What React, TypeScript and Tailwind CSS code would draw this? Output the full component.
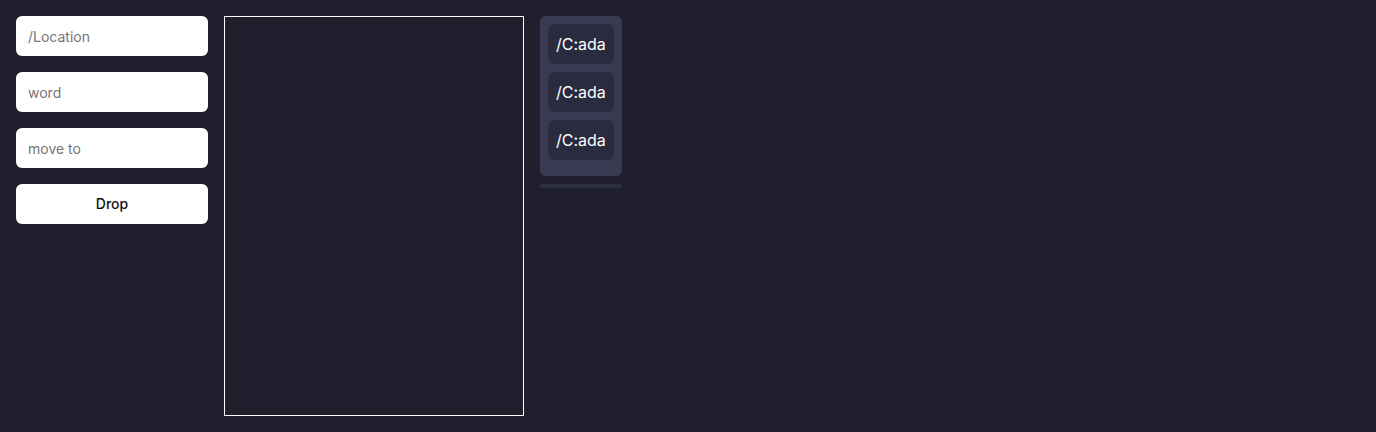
export default function App() {
  const items = ["/C:ada", "/C:ada", "/C:ada"];
  return (
    <div className="min-h-[432px] w-full bg-[#1f1f2d] p-4 font-['Inter',sans-serif] flex items-start gap-4">
      <div className="flex w-[192px] flex-col gap-4">
        <input
          placeholder="/Location"
          className="h-10 rounded-md bg-white px-3 text-sm text-black placeholder:text-[#757575] outline-none"
        />
        <input
          placeholder="word"
          className="h-10 rounded-md bg-white px-3 text-sm text-black placeholder:text-[#757575] outline-none"
        />
        <input
          placeholder="move to"
          className="h-10 rounded-md bg-white px-3 text-sm text-black placeholder:text-[#757575] outline-none"
        />
        <button className="h-10 rounded-md bg-white text-sm font-medium text-[#111]">Drop</button>
      </div>
      <div className="h-[400px] w-[300px] border border-white"></div>
      <div className="flex flex-col gap-2">
        <div className="flex flex-col gap-2 rounded-md bg-[#3a3a52] p-2 pb-4">
          {items.map((t, i) => (
            <div key={i} className="flex h-10 items-center rounded-md bg-[#2b2b40] px-2 text-base text-white">
              {t}
            </div>
          ))}
        </div>
        <div className="h-1 rounded-full bg-[#2e2e43]"></div>
      </div>
    </div>
  );
}
